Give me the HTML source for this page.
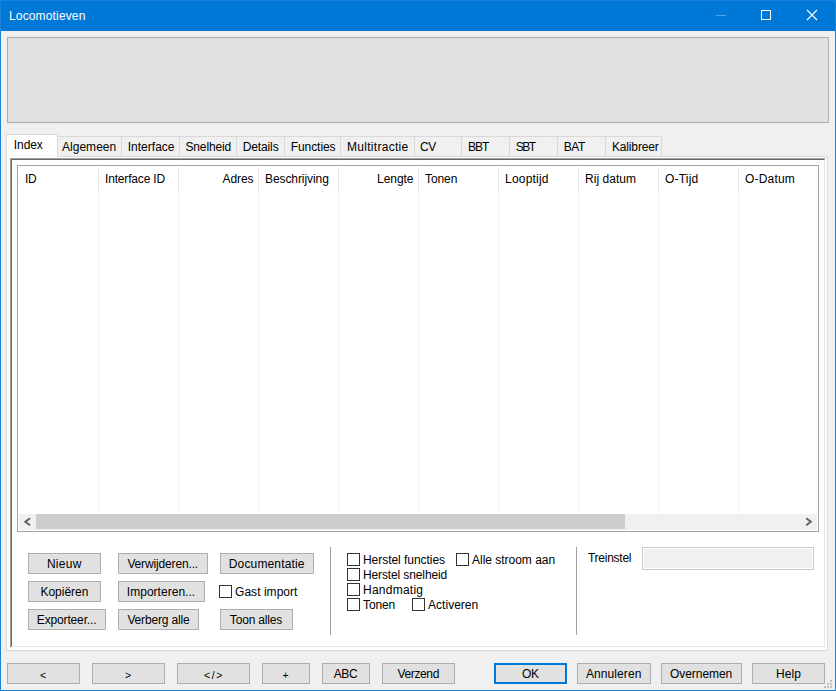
<!DOCTYPE html><html><head><meta charset="utf-8"><title>Locomotieven</title><style>

html,body{margin:0;padding:0}
body{width:836px;height:691px;overflow:hidden;background:#f0f0f0;position:relative;font-family:"Liberation Sans",sans-serif;font-size:12px;line-height:14px;color:#000}
div,span{position:absolute;box-sizing:border-box}
.t{white-space:nowrap;height:14px}
.btn{background:#e1e1e1;border:1px solid #adadad}
.btn.def{border:2px solid #0078d7}
.cb{width:13px;height:13px;background:#fff;border:1px solid #333}
.tab{background:#f0f0f0;border:1px solid #d9d9d9;border-bottom:none}
.vs{width:1px;background:#a0a0a0}
.hs{width:1px;top:167px;height:24px;background:#e5e5e5}
.gl{width:1px;top:191px;height:322px;background:#edf4fc}

</style></head><body>
<div style="left:0;top:0;width:836px;height:691px;border:1px solid #1883d9"></div>
<div style="left:1px;top:1px;width:834px;height:30px;background:#0078d7"></div><div style="left:0;top:0;width:836px;height:1px;background:#1883d9"></div>
<div style="left:716px;top:15px;width:10px;height:1px;background:#55a5e4"></div>
<div style="left:761px;top:10px;width:10px;height:10px;border:1px solid #fff"></div>
<svg style="position:absolute;left:806px;top:9px" width="12" height="12" viewBox="0 0 12 12"><path d="M1 1 L11 11 M11 1 L1 11" stroke="#fff" stroke-width="1.1" fill="none"/></svg>
<div style="left:7px;top:37px;width:822px;height:86px;background:#e1e1e1;border:1px solid #adadad"></div>
<div style="left:6px;top:156px;width:822px;height:495px;background:#fff;border:1px solid #d9d9d9"></div>
<div class="tab" style="left:57px;top:136px;width:65px;height:20px"></div>
<div class="tab" style="left:121px;top:136px;width:59px;height:20px"></div>
<div class="tab" style="left:179px;top:136px;width:58px;height:20px"></div>
<div class="tab" style="left:236px;top:136px;width:49px;height:20px"></div>
<div class="tab" style="left:284px;top:136px;width:57px;height:20px"></div>
<div class="tab" style="left:340px;top:136px;width:75px;height:20px"></div>
<div class="tab" style="left:414px;top:136px;width:48px;height:20px"></div>
<div class="tab" style="left:461px;top:136px;width:49px;height:20px"></div>
<div class="tab" style="left:509px;top:136px;width:49px;height:20px"></div>
<div class="tab" style="left:557px;top:136px;width:49px;height:20px"></div>
<div class="tab" style="left:605px;top:136px;width:57px;height:20px"></div>
<div class="tab" style="left:6px;top:134px;width:52px;height:23px;background:#fff"></div>
<div style="left:10px;top:158px;width:816px;height:490px;border-top:1px solid #a0a0a0;border-left:1px solid #a0a0a0;border-right:1px solid #fff;border-bottom:1px solid #fff"></div>
<div style="left:11px;top:159px;width:814px;height:488px;border-top:1px solid #696969;border-left:1px solid #696969;border-right:1px solid #e3e3e3;border-bottom:1px solid #e3e3e3"></div>
<div style="left:17px;top:165px;width:802px;height:367px;background:#fff;border:1px solid #a0a3aa"></div>
<div class="hs" style="left:98px"></div><div class="gl" style="left:98px"></div>
<div class="hs" style="left:178px"></div><div class="gl" style="left:178px"></div>
<div class="hs" style="left:258px"></div><div class="gl" style="left:258px"></div>
<div class="hs" style="left:338px"></div><div class="gl" style="left:338px"></div>
<div class="hs" style="left:418px"></div><div class="gl" style="left:418px"></div>
<div class="hs" style="left:498px"></div><div class="gl" style="left:498px"></div>
<div class="hs" style="left:578px"></div><div class="gl" style="left:578px"></div>
<div class="hs" style="left:658px"></div><div class="gl" style="left:658px"></div>
<div class="hs" style="left:738px"></div><div class="gl" style="left:738px"></div>
<div style="left:19px;top:514px;width:798px;height:16px;background:#f0f0f0"></div>
<div style="left:36px;top:514px;width:589px;height:15px;background:#cdcdcd"></div>
<svg style="position:absolute;left:19px;top:514px" width="17" height="16" viewBox="0 0 17 16"><path d="M11 4.2 L6.3 7.7 L11 11.2" stroke="#606060" stroke-width="1.9" fill="none"/></svg>
<svg style="position:absolute;left:800px;top:514px" width="17" height="16" viewBox="0 0 17 16"><path d="M6.2 4.2 L10.9 7.7 L6.2 11.2" stroke="#606060" stroke-width="1.9" fill="none"/></svg>
<div class="vs" style="left:330px;top:547px;height:88px"></div>
<div class="vs" style="left:576px;top:547px;height:88px"></div>
<div style="left:642px;top:547px;width:172px;height:23px;background:#f0f0f0;border:1px solid #cccccc;box-shadow:inset 0 0 0 1px #ffffff"></div>
<div class="btn" style="left:28px;top:553px;width:73px;height:21px"></div>
<div class="btn" style="left:28px;top:581px;width:73px;height:21px"></div>
<div class="btn" style="left:28px;top:609px;width:78px;height:21px"></div>
<div class="btn" style="left:118px;top:553px;width:90px;height:21px"></div>
<div class="btn" style="left:118px;top:581px;width:87px;height:21px"></div>
<div class="btn" style="left:118px;top:609px;width:81px;height:21px"></div>
<div class="btn" style="left:220px;top:553px;width:94px;height:21px"></div>
<div class="btn" style="left:220px;top:609px;width:73px;height:21px"></div>
<div class="btn" style="left:7px;top:663px;width:73px;height:21px"></div>
<div class="btn" style="left:92px;top:663px;width:73px;height:21px"></div>
<div class="btn" style="left:177px;top:663px;width:73px;height:21px"></div>
<div class="btn" style="left:262px;top:663px;width:48px;height:21px"></div>
<div class="btn" style="left:322px;top:663px;width:48px;height:21px"></div>
<div class="btn" style="left:382px;top:663px;width:73px;height:21px"></div>
<div class="btn def" style="left:494px;top:663px;width:73px;height:21px"></div>
<div class="btn" style="left:577px;top:663px;width:74px;height:21px"></div>
<div class="btn" style="left:661px;top:663px;width:81px;height:21px"></div>
<div class="btn" style="left:752px;top:663px;width:73px;height:21px"></div>
<div class="cb" style="left:219px;top:585px"></div>
<div class="cb" style="left:347px;top:553px"></div>
<div class="cb" style="left:347px;top:568px"></div>
<div class="cb" style="left:347px;top:583px"></div>
<div class="cb" style="left:347px;top:598px"></div>
<div class="cb" style="left:456px;top:553px"></div>
<div class="cb" style="left:412px;top:598px"></div>
<div style="left:830px;top:680px;width:2px;height:2px;background:#bfbfbf"></div>
<div style="left:827px;top:683px;width:2px;height:2px;background:#bfbfbf"></div>
<div style="left:830px;top:683px;width:2px;height:2px;background:#bfbfbf"></div>
<div style="left:824px;top:686px;width:2px;height:2px;background:#bfbfbf"></div>
<div style="left:827px;top:686px;width:2px;height:2px;background:#bfbfbf"></div>
<div style="left:830px;top:686px;width:2px;height:2px;background:#bfbfbf"></div>
<span class="t" id="t0" style="left:9.00px;top:9px;color:#fff;letter-spacing:0.148px">Locomotieven</span>
<span class="t" id="t1" style="left:13.80px;top:138px;color:#000;letter-spacing:-0.072px">Index</span>
<span class="t" id="t2" style="left:62.00px;top:140px;color:#000;letter-spacing:0.025px">Algemeen</span>
<span class="t" id="t3" style="left:127.75px;top:140px;color:#000;letter-spacing:0.005px">Interface</span>
<span class="t" id="t4" style="left:185.50px;top:140px;color:#000;letter-spacing:-0.152px">Snelheid</span>
<span class="t" id="t5" style="left:242.75px;top:140px;color:#000;letter-spacing:-0.134px">Details</span>
<span class="t" id="t6" style="left:290.75px;top:140px;color:#000;letter-spacing:-0.076px">Functies</span>
<span class="t" id="t7" style="left:347.00px;top:140px;color:#000;letter-spacing:0.290px">Multitractie</span>
<span class="t" id="t8" style="left:420.00px;top:140px;color:#000;letter-spacing:-0.336px">CV</span>
<span class="t" id="t9" style="left:468.00px;top:140px;color:#000;letter-spacing:-0.948px">BBT</span>
<span class="t" id="t10" style="left:515.75px;top:140px;color:#000;letter-spacing:-1.448px">SBT</span>
<span class="t" id="t11" style="left:563.75px;top:140px;color:#000;letter-spacing:-0.484px">BAT</span>
<span class="t" id="t12" style="left:611.90px;top:140px;color:#000;letter-spacing:-0.137px">Kalibreer</span>
<span class="t" id="t13" style="left:25.00px;top:172px;color:#000;letter-spacing:-0.375px">ID</span>
<span class="t" id="t14" style="left:105.00px;top:172px;color:#000;letter-spacing:-0.169px">Interface ID</span>
<span class="t" id="t15" style="left:222.50px;top:172px;color:#000;letter-spacing:-0.072px">Adres</span>
<span class="t" id="t16" style="left:265.00px;top:172px;color:#000;letter-spacing:-0.079px">Beschrijving</span>
<span class="t" id="t17" style="left:377.00px;top:172px;color:#000;letter-spacing:-0.034px">Lengte</span>
<span class="t" id="t18" style="left:425.00px;top:172px;color:#000;letter-spacing:-0.091px">Tonen</span>
<span class="t" id="t19" style="left:505.00px;top:172px;color:#000;letter-spacing:0.213px">Looptijd</span>
<span class="t" id="t20" style="left:585.00px;top:172px;color:#000;letter-spacing:0.035px">Rij datum</span>
<span class="t" id="t21" style="left:665.00px;top:172px;color:#000;letter-spacing:0.211px">O-Tijd</span>
<span class="t" id="t22" style="left:745.00px;top:172px;color:#000;letter-spacing:0.188px">O-Datum</span>
<span class="t" id="t23" style="left:235.00px;top:585px;color:#000;letter-spacing:0.044px">Gast import</span>
<span class="t" id="t24" style="left:363.00px;top:553px;color:#000;letter-spacing:-0.044px">Herstel functies</span>
<span class="t" id="t25" style="left:363.00px;top:568px;color:#000;letter-spacing:-0.122px">Herstel snelheid</span>
<span class="t" id="t26" style="left:363.00px;top:583px;color:#000;letter-spacing:0.241px">Handmatig</span>
<span class="t" id="t27" style="left:363.00px;top:598px;color:#000;letter-spacing:-0.101px">Tonen</span>
<span class="t" id="t28" style="left:472.00px;top:553px;color:#000;letter-spacing:-0.018px">Alle stroom aan</span>
<span class="t" id="t29" style="left:428.10px;top:598px;color:#000;letter-spacing:0.008px">Activeren</span>
<span class="t" id="t30" style="left:587.90px;top:551px;color:#000;letter-spacing:-0.242px">Treinstel</span>
<span class="t" id="t31" style="left:46.90px;top:557px;color:#000;letter-spacing:0.288px">Nieuw</span>
<span class="t" id="t32" style="left:40.50px;top:585px;color:#000;letter-spacing:-0.031px">Kopiëren</span>
<span class="t" id="t33" style="left:36.80px;top:613px;color:#000;letter-spacing:-0.148px">Exporteer...</span>
<span class="t" id="t34" style="left:127.40px;top:557px;color:#000;letter-spacing:-0.150px">Verwijderen...</span>
<span class="t" id="t35" style="left:126.80px;top:585px;color:#000;letter-spacing:0.028px">Importeren...</span>
<span class="t" id="t36" style="left:127.40px;top:613px;color:#000;letter-spacing:-0.162px">Verberg alle</span>
<span class="t" id="t37" style="left:228.80px;top:557px;color:#000;letter-spacing:0.146px">Documentatie</span>
<span class="t" id="t38" style="left:229.80px;top:613px;color:#000;letter-spacing:-0.165px">Toon alles</span>
<span class="t" id="t39" style="left:6.5px;width:73px;text-align:center;top:668px;color:#000;font-size:10.5px;letter-spacing:0px">&lt;</span>
<span class="t" id="t40" style="left:91.5px;width:73px;text-align:center;top:668px;color:#000;font-size:10.5px;letter-spacing:0px">&gt;</span>
<span class="t" id="t41" style="left:177.5px;width:73px;text-align:center;top:668px;color:#000;font-size:10.5px;letter-spacing:1.6px">&lt;/&gt;</span>
<span class="t" id="t42" style="left:261.5px;width:48px;text-align:center;top:668px;color:#000;font-size:10.5px;letter-spacing:0px">+</span>
<span class="t" id="t43" style="left:333.75px;top:667px;color:#000;letter-spacing:-0.396px">ABC</span>
<span class="t" id="t44" style="left:397.50px;top:667px;color:#000;letter-spacing:-0.364px">Verzend</span>
<span class="t" id="t45" style="left:522.00px;top:667px;color:#000;letter-spacing:-0.422px">OK</span>
<span class="t" id="t46" style="left:586.00px;top:667px;color:#000;letter-spacing:0.076px">Annuleren</span>
<span class="t" id="t47" style="left:670.10px;top:667px;color:#000;letter-spacing:-0.078px">Overnemen</span>
<span class="t" id="t48" style="left:775.90px;top:667px;color:#000;letter-spacing:0.153px">Help</span>
</body></html>
